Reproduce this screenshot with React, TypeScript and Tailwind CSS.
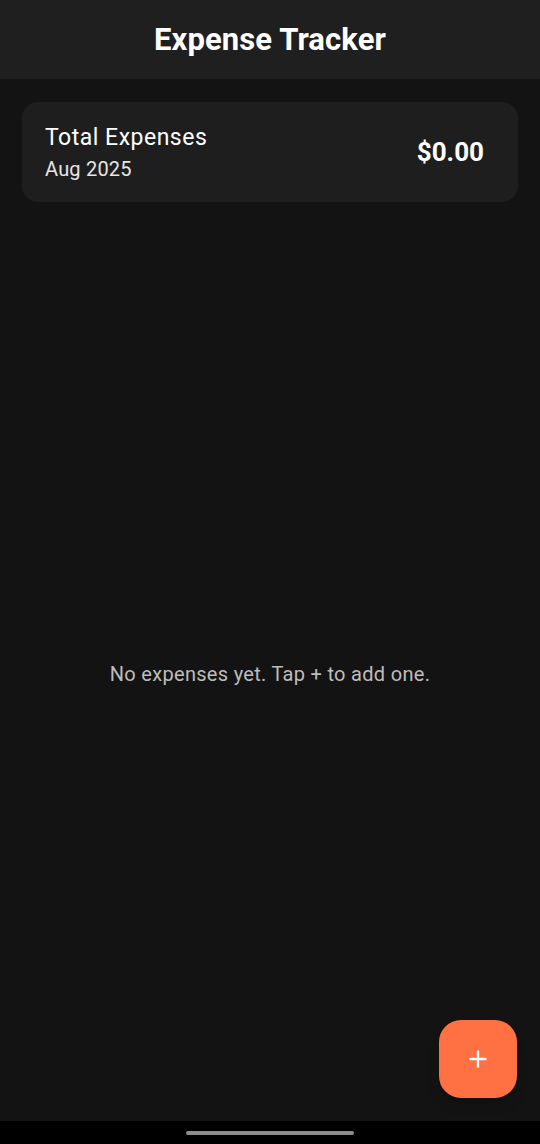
import { Plus } from 'lucide-react';

export default function App() {
  return (
    <div className="flex h-[1144px] w-[540px] flex-col bg-[#131313] font-['Roboto',sans-serif] text-white">
      {/* App bar */}
      <header className="flex h-[79px] shrink-0 items-center justify-center bg-[#1f1f1f]">
        <h1 className="text-[31px] font-bold leading-none tracking-[0.1px]">Expense Tracker</h1>
      </header>

      {/* Content */}
      <main className="relative flex flex-1 flex-col px-[22px] pt-[23px]">
        <div className="flex h-[100px] items-center justify-between rounded-[16px] bg-[#1e1e1e] pl-[23px] pr-[34px]">
          <div className="flex flex-col">
            <span className="text-[23px] leading-[28px] tracking-[0.5px]">Total Expenses</span>
            <span className="mt-[5px] text-[20px] leading-[24px] tracking-[0.2px] text-[#e6e6e6]">Aug 2025</span>
          </div>
          <span className="text-[26px] font-bold">$0.00</span>
        </div>

        <div className="flex flex-1 items-center justify-center pt-[24px]">
          <p className="text-[20px] tracking-[0.3px] text-[#bdbdbd]">No expenses yet. Tap + to add one.</p>
        </div>

        <button className="absolute bottom-[23px] right-[23px] flex h-[78px] w-[78px] items-center justify-center rounded-[22px] bg-[#ff7043] shadow-lg">
          <Plus className="h-[26px] w-[26px] text-white" strokeWidth={2.2} />
        </button>
      </main>

      {/* System nav bar */}
      <div className="flex h-[23px] shrink-0 items-center justify-center bg-black">
        <div className="h-[4px] w-[168px] rounded-full bg-[#8c8c8c]" />
      </div>
    </div>
  );
}
